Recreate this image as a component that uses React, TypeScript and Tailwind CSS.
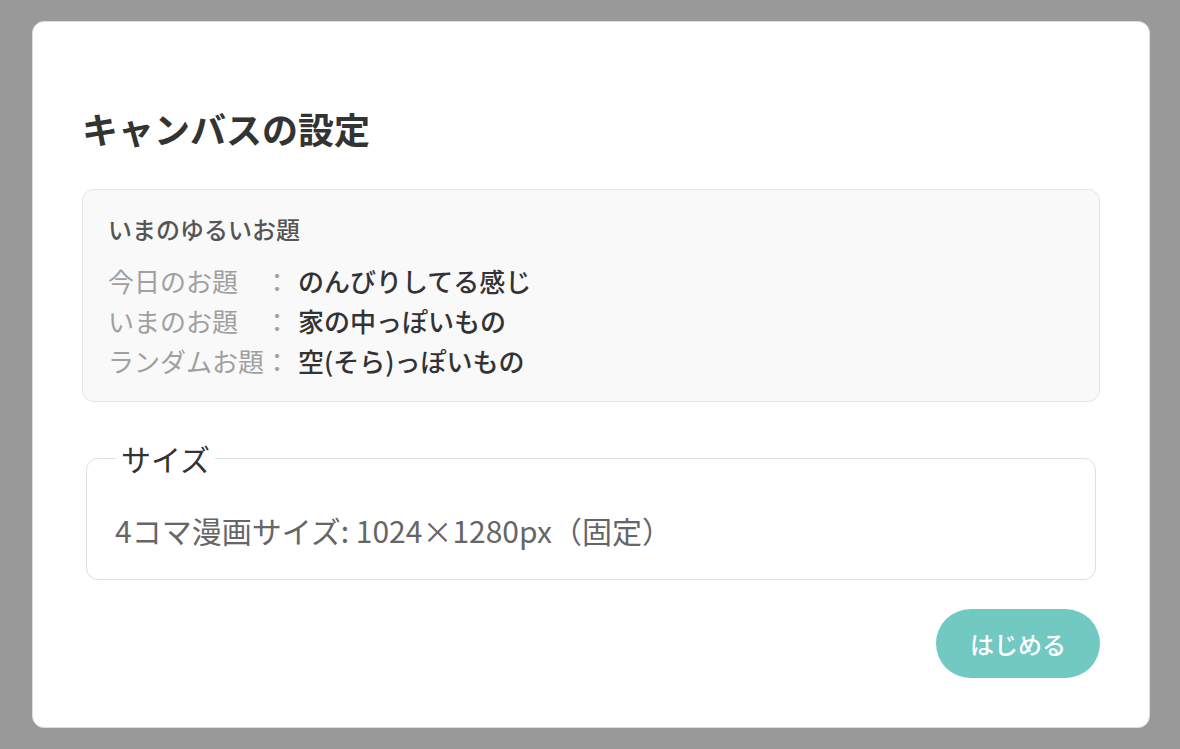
const font = { fontFamily: '"Noto Sans CJK JP", "Noto Sans", sans-serif' }

const topics = [
  { label: '今日のお題', value: 'のんびりしてる感じ' },
  { label: 'いまのお題', value: '家の中っぽいもの' },
  { label: 'ランダムお題', value: '空(そら)っぽいもの' },
]

export default function App() {
  return (
    <div className="w-[1180px] h-[749px] bg-[#999999] pt-[21px] pl-[32px] pr-[30px]" style={font}>
      <div className="h-[707px] bg-white rounded-[12px] border border-[#dddddd] px-[49px] pt-[49px]">
        <h2 className="mt-[30px] text-[36px] leading-[54px] font-bold text-[#333333]">キャンバスの設定</h2>

        <div className="mt-[34px] bg-[#f9f9f9] border border-[#e3e3e3] rounded-[12px] px-[25px] pt-[21px] pb-[20px]">
          <div className="text-[24px] leading-[36px] font-medium text-[#555555]">いまのゆるいお題</div>
          <div className="mt-[14px]">
            {topics.map((t) => (
              <div key={t.label} className="flex text-[26px] leading-[40px]">
                <span className="w-[156px] text-[#a0a0a0]">{t.label}</span>
                <span className="w-[26px] text-[#a0a0a0]">：</span>
                <span className="ml-2 font-medium text-[#333333]">{t.value}</span>
              </div>
            ))}
          </div>
        </div>

        <fieldset className="mt-[36px] mx-1 border border-[#e0e0e0] rounded-[12px] px-[28px] pb-[29px]">
          <legend className="ml-[1px] px-[5px] text-[30px] leading-[40px] text-[#333333]">サイズ</legend>
          <div className="mt-[32px] text-[30px] leading-[40px] text-[#666666]">4コマ漫画サイズ: 1024×1280px（固定）</div>
        </fieldset>

        <div className="mt-[29px] flex justify-end">
          <button className="w-[164px] h-[69px] rounded-full bg-[#72c9c1] text-white text-[24px] font-medium">はじめる</button>
        </div>
      </div>
    </div>
  )
}
